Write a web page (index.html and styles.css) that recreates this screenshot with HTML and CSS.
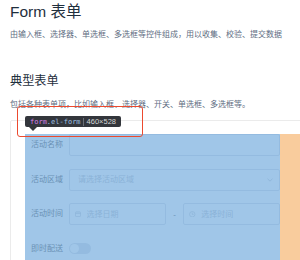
FILE: index.html
```html
<!DOCTYPE html>
<html lang="zh-CN">
<head>
  <meta charset="UTF-8" />
  <meta name="viewport" content="width=device-width, initial-scale=1.0"/>
  <title>Form 表单</title>
  <link rel="stylesheet" href="styles.css">
</head>
<body>
  <div class="page">
    <h2 class="title">Form 表单</h2>
    <p class="lead">由输入框、选择器、单选框、多选框等控件组成，用以收集、校验、提交数据</p>

    <h3 class="section-title">典型表单</h3>
    <p class="lead section-lead">包括各种表单项，比如输入框、选择器、开关、单选框、多选框等。</p>

    <div class="demo-block">
      <div class="mark"></div>
      <div class="el-tip"><span class="tip-tag">form</span><span class="tip-class">.el-form</span><span class="tip-sep"></span><span class="tip-size">460×528</span></div>

      <form class="form">
        <div class="form-item">
          <label class="form-label">活动名称</label>
          <div class="form-content">
            <div class="input"><input type="text"></div>
          </div>
        </div>
        <div class="form-item">
          <label class="form-label">活动区域</label>
          <div class="form-content">
            <div class="input">
              <input type="text" placeholder="请选择活动区域" readonly>
              <svg class="arrow" width="6" height="4" viewBox="0 0 6 4"><path d="M0.5 0.8 L3 3.2 L5.5 0.8" fill="none" stroke="#c0c4cc" stroke-width="0.8"/></svg>
            </div>
          </div>
        </div>
        <div class="form-item">
          <label class="form-label">活动时间</label>
          <div class="form-content">
            <div class="col">
              <div class="input input-icon">
                <svg class="icon" width="6" height="6" viewBox="0 0 12 12"><rect x="1" y="2" width="10" height="9" rx="1" fill="none" stroke="#c0c4cc" stroke-width="1.2"/><path d="M1 5 H11 M4 0.5 V3 M8 0.5 V3" stroke="#c0c4cc" stroke-width="1.2"/></svg>
                <input type="text" placeholder="选择日期" readonly>
              </div>
            </div>
            <div class="col-line">-</div>
            <div class="col">
              <div class="input input-icon">
                <svg class="icon" width="6.5" height="6.5" viewBox="0 0 12 12"><circle cx="6" cy="6" r="5" fill="none" stroke="#c0c4cc" stroke-width="1.2"/><path d="M6 3 V6.3 H8.5" fill="none" stroke="#c0c4cc" stroke-width="1.2"/></svg>
                <input type="text" placeholder="选择时间" readonly>
              </div>
            </div>
          </div>
        </div>
        <div class="form-item">
          <label class="form-label">即时配送</label>
          <div class="form-content">
            <span class="switch"></span>
          </div>
        </div>
        <div class="highlight"></div>
      </form>
    </div>
  </div>
</body>
</html>
```

FILE: styles.css
```css
html, body {
  margin: 0;
  padding: 0;
  overflow: hidden;
}
body {
  font-family: "Liberation Sans", "Noto Sans CJK SC", sans-serif;
  background-color: #fff;
  color: #1f2f3d;
}
.page {
  width: 560px;
  padding-left: 10px;
}
.title {
  margin: 0;
  font-size: 15.5px;
  font-weight: 400;
  line-height: 23px;
}
.lead {
  margin: 5px 0 0;
  font-size: 8px;
  line-height: 14px;
  color: #5e6d82;
}
.section-title {
  margin: 29.5px 0 0;
  font-size: 12.2px;
  font-weight: 400;
  line-height: 18px;
}
.section-lead {
  margin-top: 8.5px;
}
.demo-block {
  position: relative;
  margin-top: 8px;
  border: 1px solid #ebebeb;
  border-radius: 2px;
  padding: 13px 14px 30px;
}
.form {
  position: relative;
  width: 255px;
  height: 293px;
}
.form-item {
  display: flex;
  align-items: center;
  margin-bottom: 12.6px;
}
.form-label {
  flex: none;
  width: 44px;
  padding-right: 6px;
  box-sizing: border-box;
  text-align: right;
  font-size: 8px;
  line-height: 22px;
  color: #606266;
  white-space: nowrap;
}
.form-content {
  flex: 1;
  min-width: 0;
  display: flex;
  align-items: center;
  min-height: 22px;
}
.input {
  flex: 1;
  min-width: 0;
  display: flex;
  align-items: center;
  height: 22px;
  box-sizing: border-box;
  padding: 0 8px;
  border: 1px solid #dcdfe6;
  border-radius: 2px;
  background-color: #fff;
}
.input input {
  flex: 1;
  min-width: 0;
  width: 0;
  padding: 0;
  border: 0;
  outline: 0;
  background: transparent;
  font-family: inherit;
  font-size: 8px;
  color: #606266;
}
.input input::placeholder {
  color: #c0c4cc;
}
.arrow {
  flex: none;
  margin-right: -2px;
}
.input-icon {
  padding-left: 5px;
}
.input-icon .icon {
  flex: none;
  margin-right: 5.5px;
}
.col {
  flex: 0 0 45.833%;
  min-width: 0;
  display: flex;
}
.col-line {
  flex: 0 0 8.333%;
  text-align: center;
  font-size: 8px;
  color: #606266;
}
.switch {
  position: relative;
  width: 22px;
  height: 11px;
  border-radius: 6px;
  background-color: #dcdfe6;
}
.switch::after {
  content: "";
  position: absolute;
  top: 1px;
  left: 1px;
  width: 9px;
  height: 9px;
  border-radius: 50%;
  background-color: #fff;
}
.highlight {
  position: absolute;
  top: 0;
  left: 0;
  right: 0;
  bottom: 0;
  background-color: rgba(111, 168, 220, 0.66);
}
.highlight::after {
  content: "";
  position: absolute;
  top: 0;
  bottom: 0;
  left: 100%;
  width: 40px;
  background-color: rgba(246, 178, 107, 0.66);
}
.el-tip {
  position: absolute;
  left: 14px;
  top: -5px;
  z-index: 2;
  display: flex;
  align-items: center;
  height: 11px;
  padding: 0 5px;
  border-radius: 2px;
  background-color: #33363c;
  white-space: nowrap;
}
.el-tip::after {
  content: "";
  position: absolute;
  left: 4px;
  top: 100%;
  border-left: 4px solid transparent;
  border-right: 4px solid transparent;
  border-top: 4px solid #33363c;
}
.tip-tag,
.tip-class {
  font-family: "DejaVu Sans Mono", monospace;
  font-size: 7px;
}
.tip-tag {
  color: #d782ea;
}
.tip-class {
  color: #9ec0e2;
}
.tip-sep {
  width: 1px;
  height: 8px;
  margin: 0 2.5px;
  background-color: #6a6e75;
}
.tip-size {
  font-size: 7.5px;
  color: #d6d6d6;
}
.mark {
  position: absolute;
  left: 5.5px;
  top: -15px;
  z-index: 3;
  width: 126.5px;
  height: 31px;
  box-sizing: border-box;
  border: 1.5px solid #ec4a2f;
  border-radius: 3px;
}
```
